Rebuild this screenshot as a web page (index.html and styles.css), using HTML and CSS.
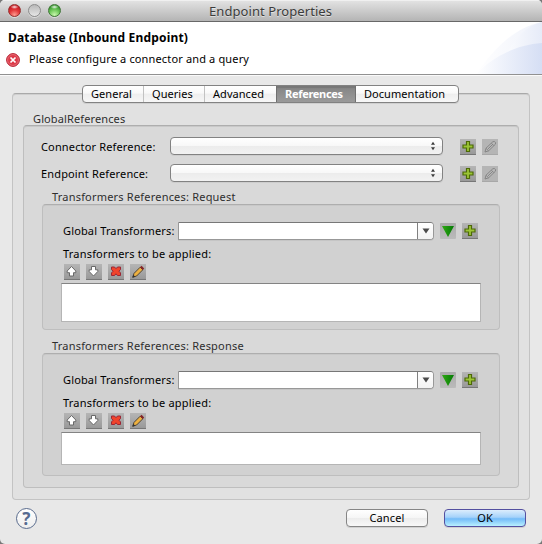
FILE: index.html
```html
<!DOCTYPE html>
<html lang="en">
<head>
<meta charset="utf-8">
<title>Endpoint Properties</title>
<link rel="stylesheet" href="styles.css">
</head>
<body>
<svg class="defs" aria-hidden="true">
  <defs>
    <linearGradient id="grass" x1="0" x2="1"><stop offset="0" stop-color="#2ea813"/><stop offset="1" stop-color="#057a05"/></linearGradient>
    <linearGradient id="sky" x1="0" x2="1"><stop offset="0" stop-color="#fff"/><stop offset="1" stop-color="#d5def4"/></linearGradient>
    <linearGradient id="haze" x1="0" x2="1"><stop offset="0" stop-color="#fff"/><stop offset="1" stop-color="#e6ebf8"/></linearGradient>
    <symbol id="plus" viewBox="0 0 16 16"><path d="M6.500 2.500h3v3.500h3.500v3h-3.500v3.500h-3V9H3V6h3.500z" fill="#9bc536" stroke="#4d6908" stroke-width="1.200"/></symbol>
    <symbol id="pencil-off" viewBox="0 0 16 16"><path d="M3 13l1-3.800 6.800-6.400Q12.300 1.800 13.600 3.500L13.400 5.200l-6.800 6.600zM9.500 4.300l2.400 2.400M4.100 9.400l2.500 2.400M6 9.900l5-4.800" fill="#b9b9b9" stroke="#858585"/></symbol>
    <symbol id="pencil" viewBox="0 0 16 16"><path d="M2.800 13.200l1.200-3.800 6.200-6.200 2.600 2.600-6.200 6.200z" fill="#eeb13f" stroke="#4e4435"/><path d="M10 3.200l1.500-1.400 2.700 2.700-1.500 1.400z" fill="#852426"/><path d="M2.300 13.700l1-3 2 2z" fill="#333"/></symbol>
    <symbol id="up" viewBox="0 0 16 16"><path d="M7.500 2.500l4.300 4.500v1.700H9.500v3.300h-4V8.700H3.200V7z" fill="#fff" stroke="#696969"/></symbol>
    <symbol id="down" viewBox="0 0 16 16"><path d="M7.500 12l4.300-4.500V5.800H9.500V2.500h-4v3.300H3.200v1.700z" fill="#fff" stroke="#696969"/></symbol>
    <symbol id="cross" viewBox="0 0 16 16"><path d="M3.500 3h3L8 4.700 9.500 3h3v2.600L10.900 7.200l1.600 1.700v2.600h-3L8 9.800l-1.500 1.700h-3V8.900l1.600-1.700-1.600-1.600z" fill="#f0442c" stroke="#9b2634"/></symbol>
    <symbol id="import" viewBox="0 0 16 16"><path d="M2 3h12L8 14z" fill="url(#grass)"/></symbol>
  </defs>
</svg>
<div class="window">
  <div class="titlebar">
    <i class="light red"></i><i class="light gray"></i><i class="light green"></i>
    <h1 class="title">Endpoint Properties</h1>
  </div>
  <header class="header">
    <svg class="swoosh" viewBox="0 0 66 52"><path d="M0 52C16 30 36 6 66 0v52z" fill="url(#haze)" opacity=".65"/><path d="M23 52C30 28 43 6 66 0v52z" fill="url(#haze)"/><path d="M0 52C14 38 36 23 66 21v31z" fill="url(#sky)"/></svg>
    <h2 class="heading">Database (Inbound Endpoint)</h2>
    <p class="error">
      <svg class="error-icon" viewBox="0 0 14 14"><circle cx="7" cy="7" r="6.400" fill="#dc3a49" stroke="#b52537"/><circle cx="7" cy="7" r="5.400" fill="none" stroke="#f08b90" stroke-width=".6"/><path d="M4.500 4.500l5 5M9.500 4.500l-5 5" stroke="#fff" stroke-width="1.700"/></svg>
      <span class="error-text">Please configure a connector and a query</span>
    </p>
  </header>
  <main class="panel">
    <nav class="tabs">
      <span class="tab general">General</span><span class="tab queries">Queries</span><span class="tab advanced">Advanced</span><span class="tab references">References</span><span class="tab documentation">Documentation</span>
    </nav>
    <h3 class="group-title t-global">GlobalReferences</h3>
    <section class="group outer">
      <div class="ref-row">
        <label class="label">Connector Reference:</label>
        <div class="popup"><svg viewBox="0 0 6 10"><path d="M1 3.800L3 .8 5 3.800zM1 6.200L3 9.200 5 6.200z" fill="#3c3c3c"/></svg></div>
        <span class="btn"><svg><use href="#plus"/></svg></span><span class="btn off"><svg><use href="#pencil-off"/></svg></span>
      </div>
      <div class="ref-row">
        <label class="label">Endpoint Reference:</label>
        <div class="popup"><svg viewBox="0 0 6 10"><path d="M1 3.800L3 .8 5 3.800zM1 6.200L3 9.200 5 6.200z" fill="#3c3c3c"/></svg></div>
        <span class="btn"><svg><use href="#plus"/></svg></span><span class="btn off"><svg><use href="#pencil-off"/></svg></span>
      </div>
      <h3 class="group-title t-request">Transformers References: Request</h3>
      <section class="group inner request">
        <div class="combo-row">
          <label class="label">Global Transformers:</label>
          <div class="combo"><span class="arrow"><svg viewBox="0 0 8 6"><path d="M.5.500h7L4 5.500z" fill="#4a4a4a"/></svg></span></div>
          <span class="btn flat"><svg><use href="#import"/></svg></span><span class="btn"><svg><use href="#plus"/></svg></span>
        </div>
        <div class="label l-applied">Transformers to be applied:</div>
        <div class="tools"><span class="btn"><svg><use href="#up"/></svg></span><span class="btn"><svg><use href="#down"/></svg></span><span class="btn"><svg><use href="#cross"/></svg></span><span class="btn"><svg><use href="#pencil"/></svg></span></div>
        <div class="list"></div>
      </section>
      <h3 class="group-title t-response">Transformers References: Response</h3>
      <section class="group inner response">
        <div class="combo-row">
          <label class="label">Global Transformers:</label>
          <div class="combo"><span class="arrow"><svg viewBox="0 0 8 6"><path d="M.5.500h7L4 5.500z" fill="#4a4a4a"/></svg></span></div>
          <span class="btn flat"><svg><use href="#import"/></svg></span><span class="btn"><svg><use href="#plus"/></svg></span>
        </div>
        <div class="label l-applied">Transformers to be applied:</div>
        <div class="tools"><span class="btn"><svg><use href="#up"/></svg></span><span class="btn"><svg><use href="#down"/></svg></span><span class="btn"><svg><use href="#cross"/></svg></span><span class="btn"><svg><use href="#pencil"/></svg></span></div>
        <div class="list"></div>
      </section>
    </section>
  </main>
  <footer class="footer">
    <span class="help">?</span>
    <span class="button">Cancel</span>
    <span class="button ok">OK</span>
  </footer>
</div>
</body>
</html>
```
FILE: styles.css
```css
* { box-sizing: border-box; }
body { margin: 0; background: #777; font: 11px/16px "Noto Sans", "Open Sans", sans-serif; letter-spacing: .15px; color: #000; }
h1, h2, h3, p { margin: 0; font-size: 11px; font-weight: 400; }
svg { display: block; flex: none; }
.defs { position: absolute; width: 0; height: 0; }
.window { width: 542px; height: 544px; overflow: hidden; background: #e8e8e8; border-radius: 5px; }
.titlebar { display: flex; align-items: center; gap: 7px; height: 22px; padding: 0 8px; background: linear-gradient(#e4e4e4, #b4b4b4); border-bottom: 1px solid #686868; box-shadow: inset 0 1px #f0f0f0; }
.light { width: 13px; height: 13px; border-radius: 50%; border: 1px solid #888; box-shadow: 0 1px #ddd; }
.red { background: radial-gradient(ellipse 4px 2px at 50% 18%, rgba(255,255,255,.9), transparent), radial-gradient(circle at 50% 90%, #ff9c90, #e2383a 45%, #c91c24 75%); border-color: #96302f; }
.gray { background: linear-gradient(#b9b9b9, #e6e6e6); border-color: #8c8c8c; }
.green { background: radial-gradient(ellipse 4px 2px at 50% 18%, rgba(255,255,255,.9), transparent), radial-gradient(circle at 50% 90%, #c9f7ae, #72ca5c 45%, #3c9c33 75%); border-color: #3e7436; }
.title { flex: 1; padding-left: 141px; font-size: 13px; letter-spacing: .07px; white-space: nowrap; color: #3c3c3c; text-shadow: 0 1px rgba(255,255,255,.5); }
.header { position: relative; height: 53px; padding: 8px 0 0 8px; background: #fff; border-bottom: 1px solid #919191; box-shadow: 0 1px #fafafa; }
.swoosh { position: absolute; right: 0; top: 0; width: 66px; height: 52px; }
.heading { font-weight: 700; font-size: 12px; letter-spacing: .18px; white-space: nowrap; }
.error { display: flex; align-items: center; gap: 9px; margin: 5px 0 0 -2px; height: 16px; white-space: nowrap; }
.error-icon { width: 14px; height: 14px; margin-top: 2px; }
.panel { width: 518px; height: 407px; margin: 18px 0 0 12px; border: 1px solid #c3c3c3; border-top-color: #a9a9a9; border-radius: 4px; background: #e1e1e1; box-shadow: inset 0 1px #cfcfcf; }
.tabs { display: flex; width: 377px; height: 18px; margin: -9px 0 0 69px; border: 1px solid #828282; border-radius: 4px; background: linear-gradient(#fff, #f9f9f9 45%, #eee 50%, #f7f7f7); position: relative; overflow: hidden; box-shadow: 0 1px #cfcfcf; }
.tab { line-height: 16px; white-space: nowrap; padding-left: 8px; border-right: 1px solid #c2c2c2; letter-spacing: .05px; }
.general { width: 61px; }
.queries { width: 61px; }
.advanced { width: 71px; border-right: 0; }
.references { width: 80px; padding-left: 9px; letter-spacing: -.3px; color: #fff; font-weight: 700; background: linear-gradient(#838383, #9a9a9a); border: 0; box-shadow: inset 1px 0 #707070, inset -1px 0 #707070, inset 0 2px 1px #777; }
.documentation { flex: 1; border: 0; }
.group-title { height: 16px; letter-spacing: .2px; color: #2e2e2e; white-space: nowrap; }
.t-global { margin: 8px 0 0 20px; letter-spacing: .12px; }
.group { border: 1px solid #bebebe; border-top-color: #aeaeae; border-radius: 4px; box-shadow: inset 0 1px #c8c8c8; }
.outer { width: 496px; height: 363px; margin: -2px 0 0 10px; padding-top: 11px; background: #d9d9d9; }
.ref-row { display: flex; align-items: flex-start; height: 18px; margin: 0 0 9px 17px; }
.label { height: 16px; line-height: 16px; white-space: nowrap; }
.ref-row .label { width: 129px; margin-top: 2px; }
.popup { width: 273px; height: 18px; margin-right: 17px; padding: 3px 6px 0 0; display: flex; justify-content: flex-end; border: 1px solid #828282; border-radius: 4px; background: linear-gradient(#fff, #f8f8f8 48%, #ececec 52%, #f2f2f2); box-shadow: 0 1px #cdcdcd; }
.popup svg { width: 6px; height: 10px; }
.btn { flex: none; width: 16px; height: 16px; margin-right: 6px; background: linear-gradient(#b5b5b5, #999); border-bottom: 1px solid #777; }
.btn svg { width: 16px; height: 16px; }
.ref-row .btn { margin-top: 2px; }
.off { background: #b5b5b5; border-bottom-color: #a8a8a8; }
.flat { background: linear-gradient(#aaa, #bbb); border-bottom: 0; border-radius: 1px; }
.t-request { margin: -2px 0 0 28px; }
.t-response { margin: 8px 0 0 28px; }
.inner { width: 458px; margin-left: 18px; background: #d1d1d1; padding: 17px 0 0 18px; }
.request { height: 126px; margin-top: -1px; }
.response { height: 123px; margin-top: -1px; }
.combo-row { display: flex; height: 18px; align-items: center; }
.combo-row .label { width: 115px; margin-left: 2px; }
.combo-row .btn { margin-top: -1px; }
.combo { display: flex; justify-content: flex-end; width: 256px; height: 18px; margin: 0 6px 0 0; background: #fff; border: 1px solid #989898; border-top-color: #777; border-radius: 0 4px 4px 0; box-shadow: 0 1px #c5c5c5; }
.arrow { width: 16px; display: flex; align-items: center; justify-content: center; border-left: 1px solid #808080; border-radius: 0 3px 3px 0; background: linear-gradient(#fff, #f2f2f2); }
.arrow svg { width: 8px; height: 6px; }
.l-applied { margin: 6px 0 0 2px; letter-spacing: .2px; }
.tools { display: flex; margin: 2px 0 0 3px; }
.list { width: 420px; height: 39px; margin-top: 3px; background: #fff; border: 1px solid #b5b5b5; border-top-color: #838383; }
.response .list { height: 33px; }
.footer { display: flex; align-items: center; height: 26px; margin: 5px 16px 0; }
.help { width: 21px; height: 21px; margin-right: auto; border: 1px solid #596b8d; border-radius: 50%; text-align: center; font-weight: 700; font-size: 17px; line-height: 19px; color: #566b91; background: linear-gradient(#fff, #eee); }
.button { width: 82px; height: 18px; border: 1px solid #858585; border-radius: 4px; background: linear-gradient(#fff, #f6f6f6 48%, #ececec 52%, #f8f8f8); text-align: center; line-height: 16px; box-shadow: 0 1px #d0d0d0; }
.ok { margin-left: 16px; border-color: #5450a0; background: linear-gradient(#dcedfd, #a5d2fa 45%, #73bbf8 55%, #b9f1ff); }
```
